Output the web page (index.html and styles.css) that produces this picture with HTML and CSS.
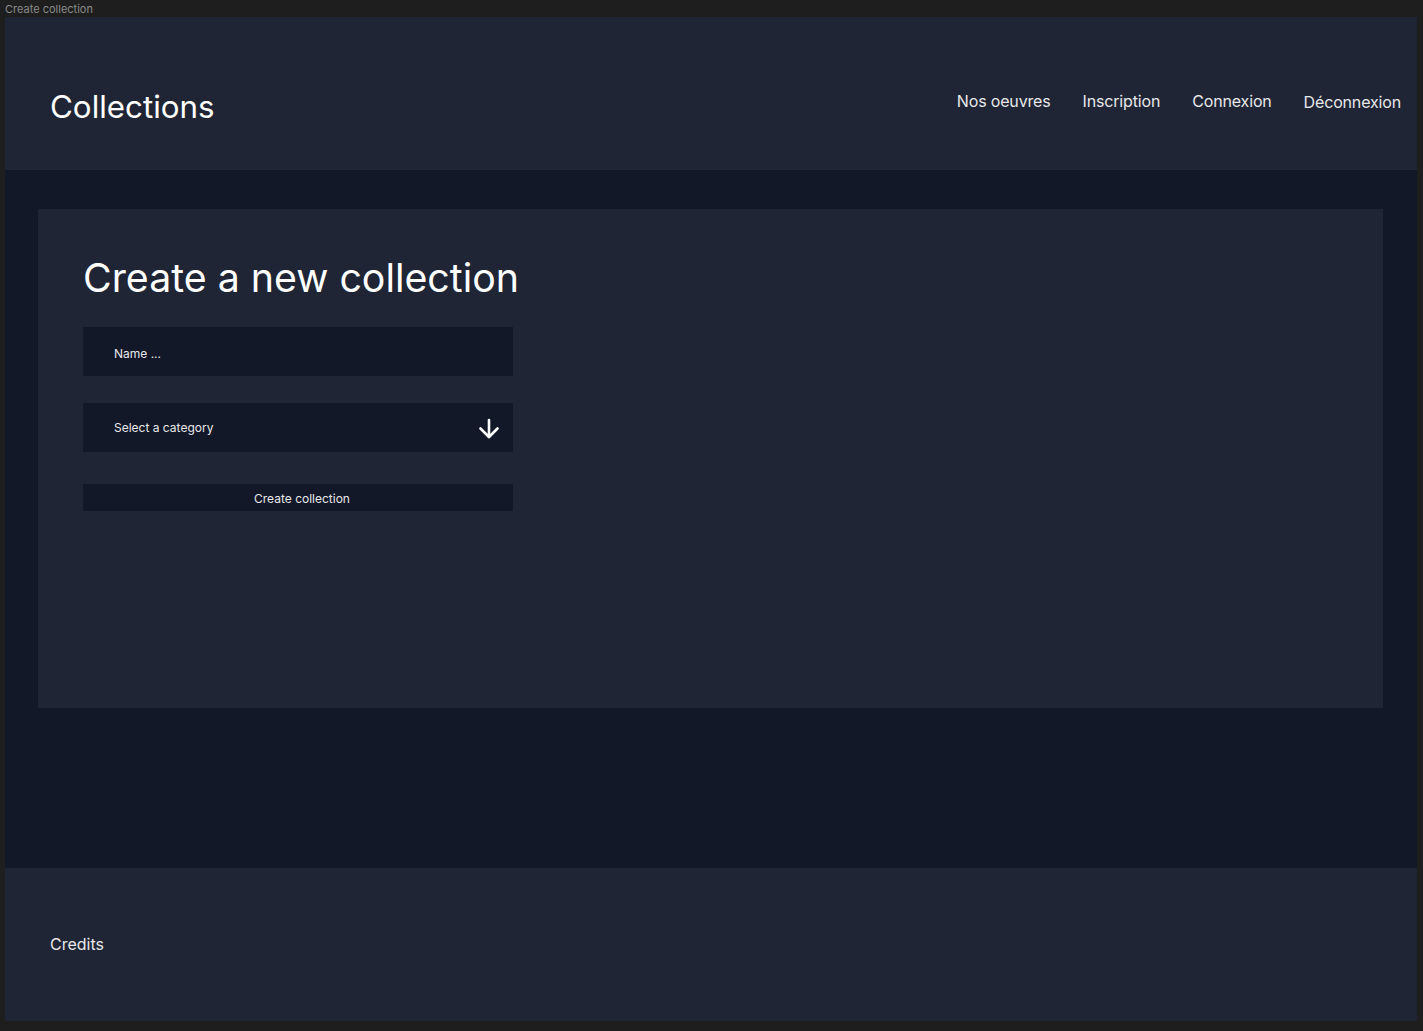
FILE: index.html
```html
<!DOCTYPE html>
<html lang="fr">
<head>
<meta charset="utf-8">
<title>Create collection</title>
<link rel="stylesheet" href="styles.css">
</head>
<body>
<div class="frame-label">Create collection</div>
<div class="frame">
  <header class="header">
    <h1 class="brand">Collections</h1>
    <nav class="nav">
      <a class="nav-link">Nos oeuvres</a>
      <a class="nav-link">Inscription</a>
      <a class="nav-link">Connexion</a>
      <a class="nav-link nav-link-last">Déconnexion</a>
    </nav>
  </header>
  <main class="main">
    <section class="card">
      <h2 class="card-title">Create a new collection</h2>
      <form class="form">
        <div class="field field-name">Name ...</div>
        <div class="field field-select">
          <span>Select a category</span>
          <svg class="arrow" width="24" height="24" viewBox="0 0 24 24" fill="none" stroke="#ffffff" stroke-width="2.6" stroke-linecap="round" stroke-linejoin="round"><path d="M12 3v17"/><path d="M3.5 11.5L12 20l8.5-8.5"/></svg>
        </div>
        <div class="button">Create collection</div>
      </form>
    </section>
  </main>
  <footer class="footer">
    <span class="credits">Credits</span>
  </footer>
</div>
</body>
</html>
```

FILE: styles.css
```css
* { box-sizing: border-box; }
html, body { margin: 0; padding: 0; }
body {
  background: #1e1e1e;
  font-family: Inter, "Noto Sans", sans-serif;
  width: 1423px;
  height: 1031px;
  overflow: hidden;
}
.frame-label {
  height: 17px;
  padding-left: 5px;
  font-size: 11px;
  line-height: 18px;
  color: #8a8a8a;
}
.frame {
  margin-left: 5px;
  width: 1412px;
  height: 1004px;
  display: flex;
  flex-direction: column;
  color: #ffffff;
}
.header {
  height: 153px;
  background: #1f2535;
  display: flex;
  align-items: center;
  justify-content: space-between;
  padding: 0 16px 0 45px;
}
.brand {
  margin: 0;
  font-size: 31.3px;
  font-weight: 400;
  line-height: 1;
  margin-top: 28px;
}
.nav {
  display: flex;
  gap: 32px;
  margin-top: 16px;
}
.nav-link {
  font-size: 16px;
  color: #e8e8ea;
  letter-spacing: -0.01em;
}
.nav-link-last { padding-top: 1px; }
.main {
  flex: 1;
  background: #121828;
  padding: 39px 34px 0 33px;
}
.card {
  background: #1f2535;
  height: 499px;
  padding: 45px 45px 0;
}
.card-title {
  margin: 0;
  font-size: 39.3px;
  font-weight: 400;
  line-height: 48px;
}
.form {
  margin-top: 25px;
  width: 430px;
  display: flex;
  flex-direction: column;
}
.field {
  height: 49px;
  background: #121828;
  padding: 0 12px 0 31px;
  font-size: 12px;
  color: #e8e8ea;
  display: flex;
  align-items: center;
}
.field-name { padding-top: 4px; }
.field-select {
  margin-top: 27px;
  justify-content: space-between;
}
.arrow { margin-top: 2px; }
.button {
  margin-top: 32px;
  height: 27px;
  background: #121828;
  font-size: 12px;
  color: #e8e8ea;
  display: flex;
  align-items: center;
  justify-content: center;
  padding-left: 8px;
  padding-top: 2px;
}
.footer {
  height: 153px;
  background: #1f2535;
  display: flex;
  align-items: center;
  padding-left: 45px;
}
.credits {
  font-size: 16px;
  color: #e8e8ea;
  margin-top: -2px;
}
```
